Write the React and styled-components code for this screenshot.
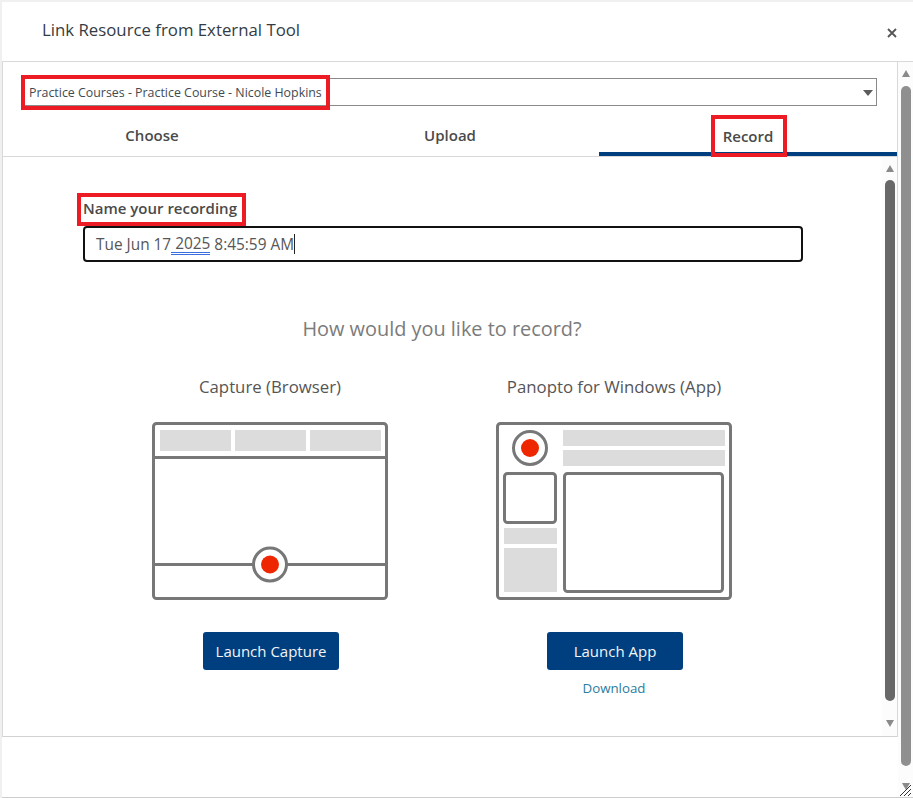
import React from 'react';
import styled, { createGlobalStyle } from 'styled-components';

const tabs = ['Choose', 'Upload', 'Record'];

const CaptureArt = () => (
    <svg width="236" height="179" viewBox="0 0 236 179">
        <rect x="1.5" y="1.5" width="233" height="175" rx="3" fill="#fff" stroke="#777" strokeWidth="3" />
        <rect x="8" y="8" width="71" height="21" fill="#dcdcdc" />
        <rect x="83" y="8" width="71" height="21" fill="#dcdcdc" />
        <rect x="158" y="8" width="71" height="21" fill="#dcdcdc" />
        <path d="M1 35.5H235M1 142.5H235" stroke="#777" strokeWidth="3" />
        <circle cx="118" cy="142.5" r="16.5" fill="#fff" stroke="#777" strokeWidth="3" />
        <circle cx="118" cy="142.5" r="9" fill="#ee2700" />
    </svg>
);

const AppArt = () => (
    <svg width="236" height="179" viewBox="0 0 236 179">
        <rect x="1.5" y="1.5" width="233" height="175" rx="3" fill="#fff" stroke="#777" strokeWidth="3" />
        <circle cx="34" cy="26" r="16.5" fill="#fff" stroke="#777" strokeWidth="3" />
        <circle cx="34" cy="26" r="9" fill="#ee2700" />
        <rect x="67" y="8" width="162" height="16" fill="#dcdcdc" />
        <rect x="67" y="28" width="162" height="16" fill="#dcdcdc" />
        <rect x="8.5" y="51.5" width="51" height="49" rx="3" fill="none" stroke="#777" strokeWidth="3" />
        <rect x="68.5" y="51.5" width="158" height="118" rx="3" fill="none" stroke="#777" strokeWidth="3" />
        <rect x="8" y="106" width="53" height="16" fill="#dcdcdc" />
        <rect x="8" y="126" width="53" height="44" fill="#dcdcdc" />
    </svg>
);

const App = () => {
    return (
        <>
            <GlobalStyle />
            <Modal>
                <Header>
                    <Title>Link Resource from External Tool</Title>
                    <CloseButton aria-label="Close">
                        <svg width="10" height="10" viewBox="0 0 10 10">
                            <path d="M1 1L9 9M9 1L1 9" stroke="#555" strokeWidth="1.8" />
                        </svg>
                    </CloseButton>
                </Header>
                <Body>
                    <Main>
                        <Frame>
                            <SelectBox>
                                <Marked $x={8} $right={8} $top={9} $bottom={9}>Practice Courses - Practice Course - Nicole Hopkins</Marked>
                                <SelectCaret />
                            </SelectBox>
                            <TabBar>
                                {tabs.map(tab => (
                                    <Tab key={tab} $active={tab === 'Record'}>
                                        {tab === 'Record' ? <Marked $x={12} $right={14} $top={11} $bottom={11}>{tab}</Marked> : tab}
                                    </Tab>
                                ))}
                            </TabBar>
                            <Panel>
                                <PanelContent>
                                    <Label><Marked $x={6} $right={9} $top={5} $bottom={8}>Name your recording</Marked></Label>
                                    <NameField>
                                        Tue Jun 17<Squiggle> 2025</Squiggle> 8:45:59 AM<Cursor />
                                    </NameField>
                                    <Question>How would you like to record?</Question>
                                    <Options>
                                        <Option>
                                            <OptionTitle>Capture (Browser)</OptionTitle>
                                            <Art><CaptureArt /></Art>
                                            <LaunchButton>Launch Capture</LaunchButton>
                                        </Option>
                                        <Option>
                                            <OptionTitle>Panopto for Windows (App)</OptionTitle>
                                            <Art><AppArt /></Art>
                                            <LaunchButton>Launch App</LaunchButton>
                                            <DownloadLink>Download</DownloadLink>
                                        </Option>
                                    </Options>
                                </PanelContent>
                                <Scrollbar $top={8} $bottom={9}>
                                    <ArrowUp />
                                    <Thumb $gap={8} $height={521} $color="#686868" />
                                    <ArrowDown />
                                </Scrollbar>
                            </Panel>
                        </Frame>
                        <Footer />
                    </Main>
                    <Scrollbar $top={8} $bottom={7}>
                        <ArrowUp />
                        <Thumb $gap={9} $height={680} $color="#8f8f8f" />
                        <ArrowDown />
                    </Scrollbar>
                </Body>
                <Grip width="12" height="12" viewBox="0 0 12 12">
                    <path d="M0 12L11 1M4 12L11 5M8 12L11 9" stroke="#333" strokeWidth="1" fill="none" />
                </Grip>
            </Modal>
        </>
    );
};

export default App;

const GlobalStyle = createGlobalStyle`
    html, body {
        margin: 0;
        height: 100%;
        background: #f0f0f0;
    }
    * {
        box-sizing: border-box;
    }
    body {
        font-family: 'Open Sans', 'Noto Sans', sans-serif;
        color: #494c4e;
    }
`;

const Modal = styled.div`
    position: relative;
    width: 911px;
    height: 796px;
    margin: 2px 0 0 2px;
    background: #fff;
    border-bottom: 1px solid #cdcdcd;
    display: flex;
    flex-direction: column;
`;

const Header = styled.div`
    height: 60px;
    flex: none;
    padding: 0 16px 4px 40px;
    display: flex;
    align-items: center;
    justify-content: space-between;
    border-bottom: 1px solid #d9d9d9;
`;

const Title = styled.div`
    font-size: 16.8px;
    color: #333c44;
`;

const CloseButton = styled.button`
    border: none;
    background: none;
    padding: 0;
    margin-top: 7px;
    line-height: 0;
    cursor: pointer;
`;

const Body = styled.div`
    flex: 1;
    min-height: 0;
    display: flex;
`;

const Main = styled.div`
    width: 896px;
    flex: none;
    display: flex;
    flex-direction: column;
`;

const Frame = styled.div`
    height: 675px;
    flex: none;
    display: flex;
    flex-direction: column;
    border-left: 1px solid #d9d9d9;
    border-right: 1px solid #d9d9d9;
    border-bottom: 1px solid #d2d2d2;
`;

const SelectBox = styled.div`
    height: 28px;
    flex: none;
    margin: 16px 20px 0 18px;
    border: 1px solid #8a8a8a;
    padding: 1px 0 0 7px;
    display: flex;
    align-items: center;
    justify-content: space-between;
    font-size: 12.4px;
    color: #3f4a52;
`;

const SelectCaret = styled.span`
    width: 0;
    height: 0;
    margin-right: 3px;
    border-left: 5px solid transparent;
    border-right: 5px solid transparent;
    border-top: 6px solid #5c5c5c;
`;

const Marked = styled.span`
    position: relative;
    &::after {
        content: '';
        position: absolute;
        left: -${p => p.$x}px;
        right: -${p => p.$right}px;
        top: -${p => p.$top}px;
        bottom: -${p => p.$bottom}px;
        border: 4px solid #ed1c24;
        pointer-events: none;
    }
`;

const TabBar = styled.div`
    height: 51px;
    flex: none;
    display: grid;
    grid-template-columns: repeat(3, 298px);
    border-bottom: 1px solid #d9d9d9;
`;

const Tab = styled.div`
    display: flex;
    align-items: center;
    justify-content: center;
    padding-top: ${p => (p.$active ? '13px' : '7px')};
    font-size: 15px;
    font-weight: 600;
    color: #4a4a4a;
    border-bottom: ${p => (p.$active ? '4px solid #003f7f' : 'none')};
`;

const Panel = styled.div`
    flex: 1;
    min-height: 0;
    display: flex;
`;

const PanelContent = styled.div`
    flex: 1;
    min-width: 0;
    padding: 41px 79px 0 80px;
`;

const Label = styled.div`
    font-size: 15px;
    font-weight: 600;
    line-height: 20px;
    color: #4a4a4a;
`;

const NameField = styled.div`
    width: 720px;
    height: 36px;
    margin-top: 8px;
    border: 2px solid #111;
    border-radius: 4px;
    padding-left: 11px;
    display: flex;
    align-items: center;
    font-size: 15.4px;
    white-space: pre;
    color: #565656;
`;

const Squiggle = styled.span`
    padding-top: 3px;
    line-height: 16px;
    border-bottom: 3px double #3b6fe0;
`;

const Cursor = styled.span`
    width: 1px;
    height: 20px;
    background: #222;
`;

const Question = styled.div`
    margin-top: 53px;
    padding-right: 2px;
    text-align: center;
    font-size: 19.9px;
    line-height: 28px;
    color: #7b7b7b;
`;

const Options = styled.div`
    margin: 33px 0 0 15px;
    display: grid;
    grid-template-columns: repeat(2, 344px);
`;

const Option = styled.div`
    display: flex;
    flex-direction: column;
    align-items: center;
`;

const OptionTitle = styled.div`
    font-size: 16.8px;
    line-height: 22px;
    color: #555;
`;

const Art = styled.div`
    margin-top: 24px;
    height: 180px;
    line-height: 0;
`;

const LaunchButton = styled.button`
    width: 136px;
    height: 38px;
    margin: 30px 0 0 2px;
    border: none;
    border-radius: 3px;
    background: #003f7f;
    color: #f2f5f8;
    font-family: inherit;
    font-size: 15px;
    cursor: pointer;
`;

const DownloadLink = styled.a`
    margin-top: 9px;
    font-size: 13.3px;
    line-height: 18px;
    color: #2b7c9e;
    cursor: pointer;
`;

const Scrollbar = styled.div`
    width: 15px;
    flex: none;
    padding: ${p => p.$top}px 0 ${p => p.$bottom}px;
    display: flex;
    flex-direction: column;
    align-items: center;
    background: #fcfcfc;
`;

const Thumb = styled.div`
    width: 10px;
    height: ${p => p.$height}px;
    margin-top: ${p => p.$gap}px;
    background: ${p => p.$color};
    border-radius: 5px;
`;

const ArrowUp = styled.span`
    width: 0;
    height: 0;
    border-left: 4.5px solid transparent;
    border-right: 4.5px solid transparent;
    border-bottom: 7px solid #8a8a8a;
`;

const ArrowDown = styled.span`
    width: 0;
    height: 0;
    margin-top: auto;
    border-left: 4.5px solid transparent;
    border-right: 4.5px solid transparent;
    border-top: 7px solid #8a8a8a;
`;

const Footer = styled.div`
    flex: 1;
`;

const Grip = styled.svg`
    position: absolute;
    right: 1px;
    bottom: 1px;
`;
